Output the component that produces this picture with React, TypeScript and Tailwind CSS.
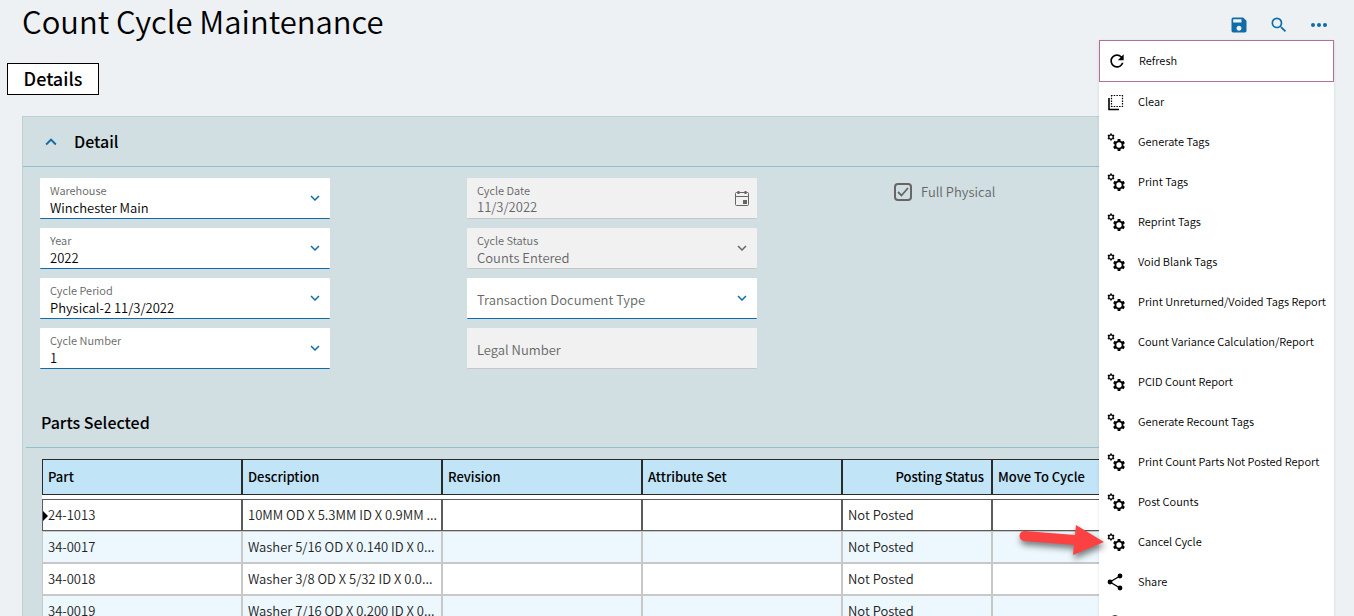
import { MdExpandLess, MdExpandMore, MdHelp, MdRefresh, MdSave, MdSearch } from 'react-icons/md'

const FONT = "font-['Noto_Sans_CJK_SC','Noto_Sans',sans-serif]"

const TEETH = [0, 60, 120, 180, 240, 300]

function GearsIcon() {
  return (
    <svg width="18" height="18" viewBox="0 0 18 18" fill="none" stroke="currentColor">
      <circle cx="4" cy="4" r="2.2" strokeWidth="1.2" />
      {TEETH.map((a) => (
        <path key={a} d="M4 2V.4" strokeWidth="1.6" transform={`rotate(${a} 4 4)`} />
      ))}
      <circle cx="12" cy="12" r="3.6" strokeWidth="1.9" />
      {TEETH.map((a) => (
        <path key={a} d="M12 8.500V6" strokeWidth="2.8" transform={`rotate(${a} 12 12)`} />
      ))}
    </svg>
  )
}

function ClearIcon() {
  return (
    <svg width="17" height="17" viewBox="0 0 17 17" fill="none" stroke="currentColor">
      <path d="M2 4v11.500h10" strokeWidth="1.6" />
      <path d="M4 1.500h12M4 12.500h12" strokeWidth="1.2" strokeDasharray="1.5 1.2" />
      <path d="M4.500 1v12M15.500 1v12" strokeWidth="1.2" strokeDasharray="1.5 1.2" />
    </svg>
  )
}

function ShareIcon() {
  return (
    <svg width="16" height="18" viewBox="0 0 16 18" fill="currentColor" stroke="currentColor">
      <path d="M13 3L3 9l10 6" fill="none" strokeWidth="1.4" />
      <circle cx="3" cy="9" r="2.4" stroke="none" />
      <circle cx="13" cy="3" r="2.4" stroke="none" />
      <circle cx="13" cy="15" r="2.4" stroke="none" />
    </svg>
  )
}

function DotsIcon() {
  return (
    <svg width="16" height="20" viewBox="0 0 16 20" fill="currentColor">
      <circle cx="2" cy="10" r="2" />
      <circle cx="8" cy="10" r="2" />
      <circle cx="14" cy="10" r="2" />
    </svg>
  )
}

function CalendarIcon() {
  return (
    <svg width="16" height="17" viewBox="0 0 16 17" fill="none" stroke="currentColor">
      <rect x="1.5" y="2.5" width="13" height="13" rx="1" />
      <path d="M1 6.5h14" />
      <path d="M4.5 1v3M11.5 1v3" strokeWidth="2" />
      <rect x="9" y="10" width="4" height="4" fill="currentColor" stroke="none" />
    </svg>
  )
}

type FieldProps = {
  id: string
  label: string
  value: string
  disabled?: boolean
}

function fieldBox(disabled?: boolean) {
  return disabled
    ? 'relative h-[41px] rounded-[1px] border-b border-[#c6c6c6] bg-[#f1f1f1] text-[#666]'
    : 'relative h-[41px] rounded-[1px] border-b border-[#0f6ca6] bg-white text-black'
}

function SelectField({ id, label, value, disabled }: FieldProps) {
  return (
    <div className={fieldBox(disabled)}>
      <label htmlFor={id} className="absolute left-[10px] top-1 text-[11px] leading-4 text-[#666]">{label}</label>
      <select
        id={id}
        disabled={disabled}
        className="h-full w-full appearance-none pl-[10px] pr-8 pt-5 text-[13px] leading-5 opacity-100 outline-none"
      >
        <option>{value}</option>
      </select>
      <MdExpandMore
        size={18}
        className={disabled ? 'pointer-events-none absolute right-[6px] top-[11px]' : 'pointer-events-none absolute right-[6px] top-[11px] text-[#0f6ca6]'}
      />
    </div>
  )
}

const menuItems = [
  'Generate Tags',
  'Print Tags',
  'Reprint Tags',
  'Void Blank Tags',
  'Print Unreturned/Voided Tags Report',
  'Count Variance Calculation/Report',
  'PCID Count Report',
  'Generate Recount Tags',
  'Print Count Parts Not Posted Report',
  'Post Counts',
  'Cancel Cycle',
]

function MenuItem({ icon, label }: { icon: React.ReactNode; label: string }) {
  return (
    <li>
      <button className="flex h-10 w-full items-center pl-2 text-left text-[11px]">
        <span className="flex w-[31px] shrink-0">{icon}</span>
        <span className="whitespace-nowrap pb-0.5">{label}</span>
      </button>
    </li>
  )
}

function ActionsMenu() {
  return (
    <ul className="absolute right-5 top-10 w-[235px] bg-white font-[350] text-black shadow-sm">
      <li>
        <button className="flex h-[42px] w-full items-center border border-[#b0709a] pl-[7px] text-left text-[11px]">
          <span className="flex w-8 shrink-0"><MdRefresh size={20} /></span>
          <span className="pb-0.5">Refresh</span>
        </button>
      </li>
      <MenuItem icon={<ClearIcon />} label="Clear" />
      {menuItems.map((label) => (
        <MenuItem key={label} icon={<GearsIcon />} label={label} />
      ))}
      <MenuItem icon={<ShareIcon />} label="Share" />
      <li>
        <button aria-label="Help" className="flex h-10 w-full items-center pl-2">
          <MdHelp size={16} />
        </button>
      </li>
    </ul>
  )
}

const columns = ['Part', 'Description', 'Revision', 'Attribute Set', 'Posting Status', 'Move To Cycle']

const parts = [
  { part: '24-1013', description: '10MM OD X 5.3MM ID X 0.9MM ...' },
  { part: '34-0017', description: 'Washer 5/16 OD X 0.140 ID X 0...' },
  { part: '34-0018', description: 'Washer 3/8 OD X 5/32 ID X 0.0...' },
  { part: '34-0019', description: 'Washer 7/16 OD X 0.200 ID X 0...' },
]

function rowStyle(i: number) {
  if (i === 0) return 'h-8 bg-white *:border *:border-[#5c5c5c]'
  if (i % 2) return 'h-8 bg-[#ecf8fe] *:border *:border-[#c8c8c8]'
  return 'h-8 bg-white *:border *:border-[#c8c8c8]'
}

function PartsTable() {
  return (
    <table className="w-full table-fixed border-separate border-spacing-0 bg-white text-[13px]">
      <colgroup>
        <col className="w-[200px]" />
        <col className="w-[200px]" />
        <col className="w-[200px]" />
        <col className="w-[200px]" />
        <col className="w-[150px]" />
        <col />
      </colgroup>
      <thead>
        <tr className="h-9 bg-[#c1e4f6]">
          {columns.map((name) => (
            <th
              key={name}
              className={name === 'Posting Status'
                ? 'border border-[#2b2b2b] px-[7px] text-right font-medium'
                : 'border border-[#2b2b2b] px-[5px] text-left font-medium'}
            >
              {name}
            </th>
          ))}
        </tr>
      </thead>
      <tbody className="font-[350] text-[#222]">
        <tr className="h-1"><td colSpan={6} /></tr>
        {parts.map((row, i) => (
          <tr key={row.part} className={rowStyle(i)}>
            <td className="relative px-[5px]">
              {i === 0 && (
                <span className="absolute left-0 top-[11px] border-y-[5px] border-l-[5px] border-y-transparent border-l-black" />
              )}
              {row.part}
            </td>
            <td className="whitespace-nowrap px-[5px]">{row.description}</td>
            <td />
            <td />
            <td className="px-[5px]">Not Posted</td>
            <td />
          </tr>
        ))}
      </tbody>
    </table>
  )
}

function Arrow() {
  return (
    <svg width="96" height="48" viewBox="0 0 96 48" className="absolute right-[248px] top-[520px] drop-shadow-[1px_4px_3px_rgba(0,0,0,0.5)]">
      <path d="M15 11L65 15L66 5L94 22L63 35L64 25L14 21A5 5 0 0 1 15 11Z" fill="#fb4141" />
    </svg>
  )
}

export default function App() {
  return (
    <div className={`${FONT} relative h-screen overflow-hidden bg-[#edf1f4] text-black`}>
      <header className="flex h-[50px] items-start justify-between pl-[22px] pr-[25px]">
        <h1 className="text-[31px] leading-[46px] -mt-0.5 font-[350]">Count Cycle Maintenance</h1>
        <div className="flex items-center gap-[20px] pt-[15px] text-[#0f6ca6]">
          <button aria-label="Save"><MdSave size={20} /></button>
          <button aria-label="Search"><MdSearch size={20} /></button>
          <button aria-label="More actions" className="flex w-5 justify-center"><DotsIcon /></button>
        </div>
      </header>

      <nav className="pl-[7px] pt-[13px]">
        <button className="h-8 w-[92px] border border-black bg-white pb-0.5 text-[18px] leading-7 font-medium">Details</button>
      </nav>

      <main className="mx-[22px] mt-[21px] h-[600px] overflow-hidden border border-[#bccfd2] bg-[#d1dee2]">
        <div className="flex h-[50px] items-center border-b border-[#94c0cb] pl-[17px]">
          <button aria-label="Collapse Detail" className="text-[#0f6ca6]"><MdExpandLess size={22} /></button>
          <h2 className="ml-3 pb-0.5 text-[16px] font-medium">Detail</h2>
        </div>

        <section className="flex h-[230px] gap-[137px] pl-[17px] pt-[11px] font-[350]">
          <div className="flex w-[290px] shrink-0 flex-col gap-[9px]">
            <SelectField id="warehouse" label="Warehouse" value="Winchester Main" />
            <SelectField id="year" label="Year" value="2022" />
            <SelectField id="period" label="Cycle Period" value="Physical-2 11/3/2022" />
            <SelectField id="number" label="Cycle Number" value="1" />
          </div>

          <div className="flex w-[290px] shrink-0 flex-col gap-[9px]">
            <div className={fieldBox(true)}>
              <label htmlFor="date" className="absolute left-[10px] top-1 text-[11px] leading-4">Cycle Date</label>
              <input
                id="date"
                disabled
                defaultValue="11/3/2022"
                className="h-full w-full pl-[10px] pt-4 text-[13px] leading-5"
              />
              <span className="absolute right-[7px] top-3"><CalendarIcon /></span>
            </div>
            <SelectField id="status" label="Cycle Status" value="Counts Entered" disabled />
            <div className={fieldBox()}>
              <select
                id="doctype"
                aria-label="Transaction Document Type"
                className="h-full w-full appearance-none pl-[10px] pt-1 text-[13px] text-[#666] outline-none"
              >
                <option>Transaction Document Type</option>
              </select>
              <MdExpandMore size={18} className="pointer-events-none absolute right-[6px] top-[11px] text-[#0f6ca6]" />
            </div>
            <div className={fieldBox(true)}>
              <input
                aria-label="Legal Number"
                placeholder="Legal Number"
                disabled
                className="h-full w-full pl-[10px] pt-0.5 text-[13px] placeholder:text-[#666]"
              />
            </div>
          </div>

          <label className="flex h-7 items-center gap-[9px] text-[13px] text-[#666]">
            <span className="relative flex h-[18px] w-[18px]">
              <input
                type="checkbox"
                defaultChecked
                disabled
                className="h-[18px] w-[18px] appearance-none rounded-sm border-2 border-[#666]"
              />
              <svg width="18" height="18" viewBox="0 0 18 18" className="absolute inset-0" fill="none" stroke="currentColor" strokeWidth="1.8">
                <path d="M4 9l3.500 3.500L14 5" />
              </svg>
            </span>
            Full Physical
          </label>
        </section>

        <section>
          <h2 className="ml-[3px] flex h-[51px] items-center border-b border-[#94c0cb] pl-[15px] text-[16px] font-medium">
            Parts Selected
          </h2>
          <div className="mt-[11px] pl-[19px] pr-5">
            <PartsTable />
          </div>
        </section>
      </main>

      <ActionsMenu />
      <Arrow />
    </div>
  )
}
